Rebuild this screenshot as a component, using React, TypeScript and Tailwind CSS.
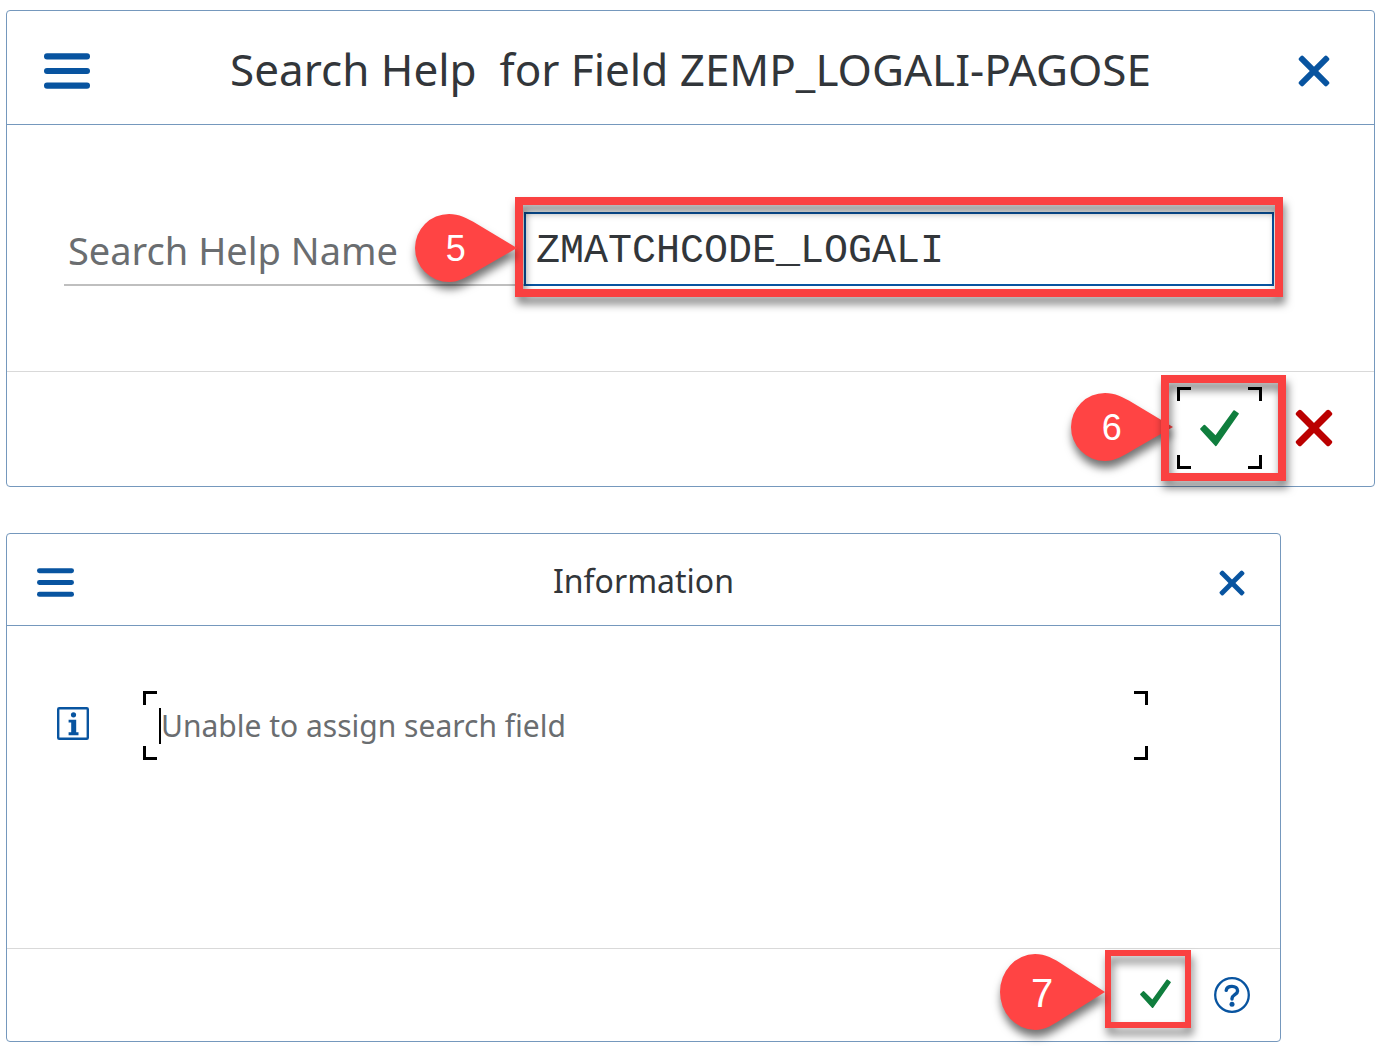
import { useState } from "react";

type DialogHeaderProps = {
    title: string;
    large?: boolean;
}

type CalloutProps = {
    label: string;
    className: string;
}

const MenuIcon = ({ className }: { className: string }) => (
    <svg viewBox="0 0 46 36" className={className} fill="#0854a0" aria-hidden="true">
        <rect x="0" y="0.2" width="46" height="6.2" rx="3" />
        <rect x="0" y="14.9" width="46" height="6.2" rx="3" />
        <rect x="0" y="29.6" width="46" height="6.2" rx="3" />
    </svg>
);

const CrossIcon = ({ className }: { className: string }) => (
    <svg viewBox="0 0 32 32" className={className} fill="currentColor" aria-hidden="true">
        <rect x="-3.8" y="13" width="39.6" height="6" rx="2" transform="rotate(45 16 16)" />
        <rect x="-3.8" y="13" width="39.6" height="6" rx="2" transform="rotate(-45 16 16)" />
    </svg>
);

const CheckIcon = ({ className }: { className: string }) => (
    <svg viewBox="0 0 39 37" className={className} fill="#107e3e" stroke="#107e3e" strokeWidth="2" strokeLinejoin="round" aria-hidden="true">
        <path d="M1.2 19 4.4 15.8 15.6 26.8 34.2 1.2 37.8 3.8 15.8 35.2Z" />
    </svg>
);

const InfoIcon = () => (
    <svg viewBox="0 0 32 33" className="w-8 h-[33px] shrink-0" fill="#0854a0" role="img" aria-label="Information">
        <rect x="1.2" y="1.2" width="29.6" height="30.6" rx="1" fill="none" stroke="#0854a0" strokeWidth="2.4" />
        <circle cx="16.5" cy="7.8" r="2.6" />
        <path d="M11.6 12.8H19.2V25.2H21.5V28.2H11.6V25.2H14.2V15.6H11.6Z" />
    </svg>
);

const HelpIcon = () => (
    <svg viewBox="0 0 36 36" className="size-9" fill="none" stroke="#0854a0" aria-hidden="true">
        <circle cx="18" cy="18" r="16.8" strokeWidth="2.3" />
        <path d="M12.2 13.4C12.6 10.7 14.9 9.4 18 9.4 21.3 9.4 23.6 11.2 23.6 13.9 23.6 17.6 18 17.8 18 21.6V22" strokeWidth="3.4" strokeLinecap="round" />
        <circle cx="18" cy="27.2" r="2.5" fill="#0854a0" stroke="none" />
    </svg>
);

// black corner brackets that mark the focused element
const FocusCorners = () => (
    <>
        <span className="absolute left-0 top-0 size-3.5 border-l-3 border-t-3 border-black" />
        <span className="absolute right-0 top-0 size-3.5 border-r-3 border-t-3 border-black" />
        <span className="absolute left-0 bottom-0 size-3.5 border-l-3 border-b-3 border-black" />
        <span className="absolute right-0 bottom-0 size-3.5 border-r-3 border-b-3 border-black" />
    </>
);

const Frame = ({ className }: { className: string }) => (
    <span className={`absolute pointer-events-none border-[#fa4141] drop-shadow-[2px_7px_4px_rgba(0,0,0,0.5)] ${className}`} />
);

const Callout = ({ label, className }: CalloutProps) => (
    <span className={`absolute pointer-events-none ${className}`}>
        <svg viewBox="0 0 102 68" preserveAspectRatio="none" className="absolute inset-0 size-full overflow-visible drop-shadow-[1px_7px_4px_rgba(0,0,0,0.55)]" fill="#ff4444" aria-hidden="true">
            <path d="M34 0C44 0 52 4 62 10L102 34 62 57C52 63 44 68 34 68A34 34 0 0 1 34 0Z" />
        </svg>
        <span className="relative flex h-full w-4/5 items-center justify-center pt-0.5 text-white font-['Liberation_Sans',sans-serif]">{label}</span>
    </span>
);

const DialogHeader = ({ title, large }: DialogHeaderProps) => (
    <header className={`flex items-center justify-between border-b border-[#7598bd] pt-1.5 ${large ? "h-[114px] px-[37px]" : "h-[92px] px-[30px]"}`}>
        <button aria-label="Menu" className="shrink-0">
            <MenuIcon className={large ? "w-[46px] h-9" : "w-[37px] h-[29px]"} />
        </button>
        <h2 className={`whitespace-pre pb-1 text-[#32363a] ${large ? "text-[44px]" : "text-[32px]"}`}>{title}</h2>
        <button aria-label="Close" className={`flex shrink-0 justify-center text-[#0854a0] ${large ? "w-[46px]" : "w-[37px]"}`}>
            <CrossIcon className={large ? "size-8" : "size-[26px]"} />
        </button>
    </header>
);

const App = () => {

    const [searchHelp, setSearchHelp] = useState("ZMATCHCODE_LOGALI");

    return (
        <main className="min-h-screen bg-white pl-1.5 pr-1 pt-2.5 pb-1 font-['Noto_Sans',sans-serif]">
            <section className="rounded border border-[#7598bd]">
                <DialogHeader title="Search Help  for Field ZEMP_LOGALI-PAGOSE" large />
                <div className="flex pl-[57px] pr-[100px] pt-[87px] pb-[85px]">
                    <label htmlFor="search-help" className="h-[74px] w-[460px] shrink-0 border-b-2 border-[#bfbfbf] pl-1 pt-0.5 text-[38px] leading-[72px] text-[#6a6d70]">
                        Search Help Name
                    </label>
                    <div className="relative flex-1">
                        <input
                            id="search-help"
                            className="block h-[74px] w-full border-2 border-[#0854a0] px-2.5 pt-1 text-[40px] leading-[60px] text-[#32363a] focus:outline-none font-['Liberation_Mono',monospace]"
                            type="text"
                            value={searchHelp}
                            onChange={(e) => setSearchHelp(e.target.value)}
                        />
                        <Frame className="-inset-x-[9px] -top-[15px] -bottom-[11px] border-8" />
                        <Callout label="5" className="right-full top-0.5 mr-[7px] h-17 w-[102px] text-4xl" />
                    </div>
                </div>
                <footer className="flex h-[115px] items-center justify-end gap-[33px] border-t border-[#d9d9d9] pr-[41px] pb-0.5">
                    <div className="relative">
                        <button aria-label="Continue" className="relative flex h-[82px] w-[85px] items-center justify-center">
                            <CheckIcon className="w-[39px] h-[37px]" />
                            <FocusCorners />
                        </button>
                        <Callout label="6" className="right-full top-1.5 mr-1 h-17 w-[102px] text-4xl" />
                        <Frame className="-left-4 -right-6 -top-3 -bottom-3 border-8" />
                    </div>
                    <button aria-label="Cancel" className="text-[#bb0000]">
                        <CrossIcon className="size-[38px]" />
                    </button>
                </footer>
            </section>

            <section className="mt-[46px] mr-[94px] rounded border border-[#7598bd]">
                <DialogHeader title="Information" />
                <div className="flex items-start gap-[54px] pl-[50px] pr-[132px] pt-[65px] pb-[188px]">
                    <div className="pt-4">
                        <InfoIcon />
                    </div>
                    <p className="relative flex h-[69px] flex-1 items-center pl-4 text-[#6a6d70]">
                        <FocusCorners />
                        <span className="border-l-2 border-black text-3xl leading-9">Unable to assign search field</span>
                    </p>
                </div>
                <footer className="flex h-[93px] items-center justify-end gap-[23px] border-t border-[#d9d9d9] pr-[30px]">
                    <div className="relative mt-px self-start">
                        <button aria-label="Continue" className="flex h-[78px] w-[86px] items-center justify-center pl-3.5 pt-2.5">
                            <CheckIcon className="w-[31px] h-[30px]" />
                        </button>
                        <Frame className="inset-0 border-6" />
                        <Callout label="7" className="right-full top-1 h-[76px] w-[105px] text-[40px]" />
                    </div>
                    <button aria-label="Help">
                        <HelpIcon />
                    </button>
                </footer>
            </section>
        </main>
    );
}

export default App;
